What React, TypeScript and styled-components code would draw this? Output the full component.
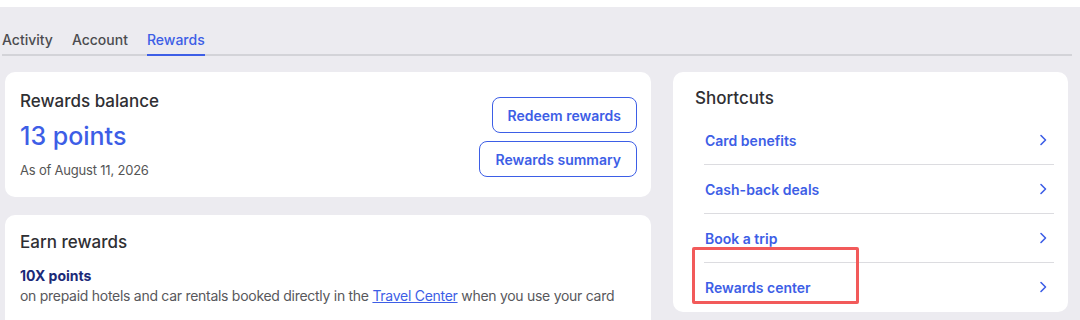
import React from "react";
import styled, { createGlobalStyle } from "styled-components";

const Global = createGlobalStyle`
  html, body { margin: 0; padding: 0; background: #ecebf0; }
  body { font-family: Inter, "Noto Sans", sans-serif; color: #333; }
  * { box-sizing: border-box; }
`;

const BLUE = "#3d5ee6";

const Page = styled.div`
  width: 1080px;
  height: 320px;
  overflow: hidden;
  background: #ecebf0;
  border-top: 7px solid #ffffff;
`;

const Main = styled.div`
  padding: 0 8px 0 2px;
`;

const TabBar = styled.nav`
  display: flex;
  gap: 19px;
  padding-top: 24px;
  border-bottom: 2px solid #d3d3d8;
  width: 1070px;
`;

const Tab = styled.div<{ $active?: boolean }>`
  font-size: 14px;
  line-height: 18px;
  font-weight: 500;
  padding-bottom: 5px;
  margin-bottom: -2px;
  color: ${(p) => (p.$active ? BLUE : "#4b4b4f")};
  border-bottom: 2px solid ${(p) => (p.$active ? BLUE : "transparent")};
`;

const Grid = styled.div`
  display: grid;
  grid-template-columns: 646px 395px;
  column-gap: 22px;
  margin: 16px 0 0 3px;
  align-items: start;
`;

const Column = styled.div`
  display: flex;
  flex-direction: column;
  gap: 18px;
`;

const Card = styled.section`
  background: #fff;
  border-radius: 10px;
  position: relative;
`;

const BalanceCard = styled(Card)`
  height: 125px;
  display: flex;
  justify-content: space-between;
  align-items: center;
  padding: 0 14px 0 15px;
`;

const BalanceInfo = styled.div`
  display: flex;
  flex-direction: column;
`;

const Heading = styled.h2`
  margin: 0;
  font-size: 17px;
  line-height: 22px;
  font-weight: 500;
  color: #2f2f33;
`;

const Points = styled.div`
  margin-top: 8px;
  font-size: 25px;
  line-height: 32px;
  font-weight: 500;
  color: ${BLUE};
`;

const AsOf = styled.div`
  margin-top: 9px;
  font-size: 13px;
  line-height: 18px;
  letter-spacing: -0.2px;
  color: #555;
`;

const Buttons = styled.div`
  display: flex;
  flex-direction: column;
  align-items: flex-end;
  gap: 8px;
  margin-top: 5px;
`;

const OutlineButton = styled.button`
  height: 36px;
  padding: 0 15px;
  border: 1px solid ${BLUE};
  border-radius: 8px;
  background: #fff;
  color: ${BLUE};
  font-family: inherit;
  font-size: 14px;
  font-weight: 600;
`;

const EarnCard = styled(Card)`
  height: 140px;
  padding: 16px 15px;
`;

const Offer = styled.div`
  margin-top: 13px;
  display: flex;
  flex-direction: column;
`;

const OfferTitle = styled.div`
  font-size: 14px;
  line-height: 20px;
  font-weight: 700;
  color: #1b2a78;
`;

const OfferText = styled.div`
  font-size: 14px;
  line-height: 20px;
  letter-spacing: -0.28px;
  white-space: nowrap;
  color: #58585c;
`;

const Link = styled.a`
  color: ${BLUE};
  text-decoration: underline;
`;

const ShortcutsCard = styled(Card)`
  height: 240px;
  padding: 15px 14px 0 22px;
`;

const List = styled.ul`
  list-style: none;
  margin: 7px 0 0 9px;
  padding: 0;
`;

const Row = styled.li<{ $last?: boolean }>`
  height: ${(p) => (p.$last ? "48px" : "49px")};
  display: flex;
  align-items: center;
  justify-content: space-between;
  padding: 0 6px 0 1px;
  border-bottom: ${(p) => (p.$last ? "none" : "1px solid #dcdce0")};
  font-size: 14px;
  font-weight: 600;
  color: ${BLUE};
`;

const Highlight = styled.div`
  position: absolute;
  left: 19px;
  top: 175px;
  width: 167px;
  height: 57px;
  border: 3px solid #f25a5a;
  border-radius: 2px;
  pointer-events: none;
`;

const Chevron = () => (
  <svg width="10" height="14" viewBox="0 0 10 14" fill="none">
    <path d="M3 2.5 L7.5 7 L3 11.5" stroke={BLUE} strokeWidth="1.6" strokeLinecap="round" strokeLinejoin="round" />
  </svg>
);

const shortcuts = ["Card benefits", "Cash-back deals", "Book a trip", "Rewards center"];

export default function App() {
  return (
    <Page>
      <Global />
      <Main>
        <TabBar>
          <Tab>Activity</Tab>
          <Tab>Account</Tab>
          <Tab $active>Rewards</Tab>
        </TabBar>
        <Grid>
          <Column>
            <BalanceCard>
              <BalanceInfo>
                <Heading>Rewards balance</Heading>
                <Points>13 points</Points>
                <AsOf>As of August 11, 2026</AsOf>
              </BalanceInfo>
              <Buttons>
                <OutlineButton>Redeem rewards</OutlineButton>
                <OutlineButton>Rewards summary</OutlineButton>
              </Buttons>
            </BalanceCard>
            <EarnCard>
              <Heading>Earn rewards</Heading>
              <Offer>
                <OfferTitle>10X points</OfferTitle>
                <OfferText>
                  on prepaid hotels and car rentals booked directly in the <Link>Travel Center</Link> when you use your card
                </OfferText>
              </Offer>
            </EarnCard>
          </Column>
          <ShortcutsCard>
            <Heading>Shortcuts</Heading>
            <List>
              {shortcuts.map((s, i) => (
                <Row key={s} $last={i === shortcuts.length - 1}>
                  <span>{s}</span>
                  <Chevron />
                </Row>
              ))}
            </List>
            <Highlight />
          </ShortcutsCard>
        </Grid>
      </Main>
    </Page>
  );
}
